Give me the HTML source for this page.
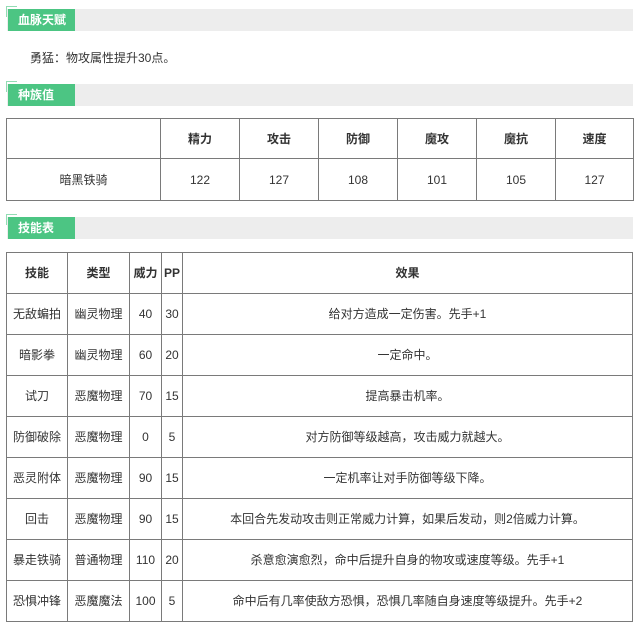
<!DOCTYPE html>
<html><head><style>
body{margin:0;background:#fff;font-family:"Liberation Sans","Noto Sans CJK SC",sans-serif;font-size:12px;color:#333;width:641px;height:628px;position:relative;overflow:hidden}
.h{position:absolute;left:7px;width:626px;height:22px;background:#ededed}
.h b{position:absolute;left:1px;top:0;width:67px;height:22px;background:#4cc583;color:#fff;font-size:12px;line-height:22px;text-indent:10px}
.h i{position:absolute;left:-1px;top:-3px;width:10px;height:10px;border-left:1px solid #4cc583;border-top:1px solid #4cc583;opacity:.6}
table{position:absolute;left:6px;border-collapse:collapse;table-layout:fixed;font-size:12px}
td{border:1px solid #7a7a7a;text-align:center;padding:0;color:#333;white-space:nowrap;font-size:12px;line-height:14px}
.th td{font-weight:bold}
</style></head><body>
<div class="h" style="top:9px"><i></i><b>血脉天赋</b></div>
<div style="position:absolute;left:30px;top:49px">勇猛：物攻属性提升30点。</div>
<div class="h" style="top:84px"><i></i><b>种族值</b></div>
<table style="top:118px;width:627px">
<colgroup><col style="width:154px"><col style="width:79px"><col style="width:79px"><col style="width:79px"><col style="width:79px"><col style="width:79px"><col style="width:78px"></colgroup>
<tr class="th" style="height:40px"><td></td><td>精力</td><td>攻击</td><td>防御</td><td>魔攻</td><td>魔抗</td><td>速度</td></tr>
<tr style="height:42px"><td>暗黑铁骑</td><td>122</td><td>127</td><td>108</td><td>101</td><td>105</td><td>127</td></tr>
</table>
<div class="h" style="top:217px"><i></i><b>技能表</b></div>
<table style="top:252px;width:627px">
<colgroup><col style="width:61px"><col style="width:62px"><col style="width:32px"><col style="width:21px"><col></colgroup>
<tr class="th" style="height:41px"><td>技能</td><td>类型</td><td>威力</td><td>PP</td><td>效果</td></tr>
<tr style="height:41px"><td>无敌蝙拍</td><td>幽灵物理</td><td>40</td><td>30</td><td>给对方造成一定伤害。先手+1</td></tr>
<tr style="height:41px"><td>暗影拳</td><td>幽灵物理</td><td>60</td><td>20</td><td>一定命中。</td></tr>
<tr style="height:41px"><td>试刀</td><td>恶魔物理</td><td>70</td><td>15</td><td>提高暴击机率。</td></tr>
<tr style="height:41px"><td>防御破除</td><td>恶魔物理</td><td>0</td><td>5</td><td>对方防御等级越高，攻击威力就越大。</td></tr>
<tr style="height:41px"><td>恶灵附体</td><td>恶魔物理</td><td>90</td><td>15</td><td>一定机率让对手防御等级下降。</td></tr>
<tr style="height:41px"><td>回击</td><td>恶魔物理</td><td>90</td><td>15</td><td>本回合先发动攻击则正常威力计算，如果后发动，则2倍威力计算。</td></tr>
<tr style="height:41px"><td>暴走铁骑</td><td>普通物理</td><td>110</td><td>20</td><td>杀意愈演愈烈，命中后提升自身的物攻或速度等级。先手+1</td></tr>
<tr style="height:41px"><td>恐惧冲锋</td><td>恶魔魔法</td><td>100</td><td>5</td><td>命中后有几率使敌方恐惧，恐惧几率随自身速度等级提升。先手+2</td></tr>
</table>
</body></html>
